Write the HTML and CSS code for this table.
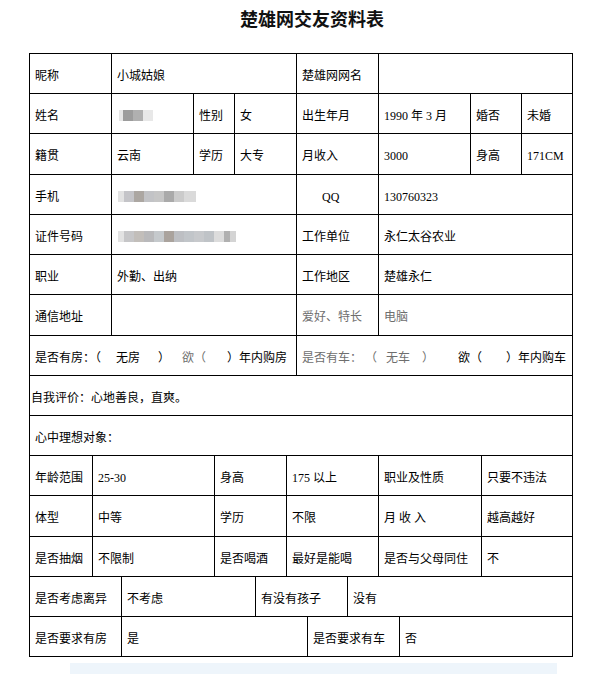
FILE: index.html
```html
<!DOCTYPE html>
<html lang="zh-CN">
<head>
<meta charset="utf-8">
<title>楚雄网交友资料表</title>
<link rel="stylesheet" href="styles.css">
</head>
<body>
<h1 class="title">楚雄网交友资料表</h1>
<div class="sheet">
  <div class="sec sec-a">
    <div class="cell">昵称</div>
    <div class="cell span3">小城姑娘</div>
    <div class="cell">楚雄网网名</div>
    <div class="cell span3"></div>

    <div class="cell">姓名</div>
    <div class="cell"><span class="blur blur-name"></span></div>
    <div class="cell">性别</div>
    <div class="cell">女</div>
    <div class="cell">出生年月</div>
    <div class="cell">1990 年 3 月</div>
    <div class="cell">婚否</div>
    <div class="cell">未婚</div>

    <div class="cell">籍贯</div>
    <div class="cell">云南</div>
    <div class="cell">学历</div>
    <div class="cell">大专</div>
    <div class="cell">月收入</div>
    <div class="cell">3000</div>
    <div class="cell">身高</div>
    <div class="cell">171CM</div>

    <div class="cell">手机</div>
    <div class="cell span3"><span class="blur blur-phone"></span></div>
    <div class="cell qq">QQ</div>
    <div class="cell span3">130760323</div>

    <div class="cell">证件号码</div>
    <div class="cell span3"><span class="blur blur-id"></span></div>
    <div class="cell">工作单位</div>
    <div class="cell span3">永仁太谷农业</div>

    <div class="cell">职业</div>
    <div class="cell span3">外勤、出纳</div>
    <div class="cell">工作地区</div>
    <div class="cell span3">楚雄永仁</div>

    <div class="cell">通信地址</div>
    <div class="cell span3"></div>
    <div class="cell faded">爱好、特长</div>
    <div class="cell span3 faded">电脑</div>

    <div class="cell span4">是否有房：（&nbsp;&nbsp;&nbsp;&nbsp;&nbsp;无房&nbsp;&nbsp;&nbsp;&nbsp;&nbsp;&nbsp;）&nbsp;&nbsp;&nbsp;&nbsp;<span class="faded">欲（</span>&nbsp;&nbsp;&nbsp;&nbsp;&nbsp;&nbsp;&nbsp;）年内购房</div>
    <div class="cell span4"><span class="faded">是否有车：&nbsp;（&nbsp;&nbsp;&nbsp;无车&nbsp;&nbsp;&nbsp;&nbsp;）</span>&nbsp;&nbsp;&nbsp;&nbsp;&nbsp;&nbsp;&nbsp;&nbsp;欲（&nbsp;&nbsp;&nbsp;&nbsp;&nbsp;&nbsp;&nbsp;&nbsp;）年内购车</div>

    <div class="cell span8 tight">自我评价：心地善良，直爽。</div>
    <div class="cell span8">心中理想对象：</div>
  </div>

  <div class="sec sec-c">
    <div class="cell">年龄范围</div>
    <div class="cell">25-30</div>
    <div class="cell">身高</div>
    <div class="cell">175 以上</div>
    <div class="cell">职业及性质</div>
    <div class="cell">只要不违法</div>

    <div class="cell">体型</div>
    <div class="cell">中等</div>
    <div class="cell">学历</div>
    <div class="cell">不限</div>
    <div class="cell">月 收 入</div>
    <div class="cell">越高越好</div>

    <div class="cell">是否抽烟</div>
    <div class="cell">不限制</div>
    <div class="cell">是否喝酒</div>
    <div class="cell">最好是能喝</div>
    <div class="cell">是否与父母同住</div>
    <div class="cell">不</div>
  </div>

  <div class="sec sec-d">
    <div class="cell">是否考虑离异</div>
    <div class="cell">不考虑</div>
    <div class="cell span2">有没有孩子</div>
    <div class="cell span2">没有</div>

    <div class="cell">是否要求有房</div>
    <div class="cell span2">是</div>
    <div class="cell span2">是否要求有车</div>
    <div class="cell">否</div>
  </div>
</div>
<div class="band"></div>
</body>
</html>
```

FILE: styles.css
```css
body {
  margin: 0;
  background: #fff;
  color: #000;
  font-family: "Liberation Serif", "Noto Sans CJK SC", serif;
  font-size: 12px;
}

.title {
  margin: 9px 0 26px;
  padding-left: 29px;
  text-align: center;
  font-family: "Noto Sans CJK SC", sans-serif;
  font-size: 18px;
  line-height: 18px;
  font-weight: bold;
  color: #111;
}

.sheet {
  margin-left: 29px;
  width: 544px;
  box-sizing: border-box;
  padding: 1px;
  background: #000;
  display: flex;
  flex-direction: column;
  gap: 1px;
}

.sec {
  display: grid;
  gap: 1px;
}

.sec-a {
  grid-template-columns: 81px 81px 40px 61px 81px 91px 50px 50px;
  grid-template-rows: 39px 39px 40px 39px 39px 39px 40px 39px 39px 39px;
}

.sec-c {
  grid-template-columns: 62px 121px 71px 91px 102px 90px;
  grid-template-rows: 39px 40px 39px;
}

.sec-d {
  grid-template-columns: 91px 133px 51px 39px 51px 172px;
  grid-template-rows: 39px 39px;
}

.cell {
  background: #fff;
  display: flex;
  align-items: center;
  box-sizing: border-box;
  padding: 4px 0 0 5px;
  line-height: 12px;
  white-space: nowrap;
  overflow: hidden;
}

.span2 { grid-column: span 2; }
.span3 { grid-column: span 3; }
.span4 { grid-column: span 4; }
.span8 { grid-column: span 8; }

.tight { padding-left: 1px; }

.qq { padding-left: 25px; }

.faded { color: #6e6e6e; }

.blur {
  display: inline-block;
  height: 11px;
  filter: blur(0.7px);
}

.blur-name {
  width: 34px;
  margin-left: 2px;
  background: linear-gradient(90deg, #e6e6e6 0 4px, #9c9c9c 4px 14px, #b0b0b0 14px 24px, #e8e8e8 24px 34px);
}

.blur-phone {
  width: 78px;
  margin-left: 1px;
  background: linear-gradient(90deg, #e2e2e2 0 6px, #c4c4c8 6px 16px, #aca7a2 16px 26px, #c2c3c6 26px 36px, #c6c6c6 36px 46px, #aaaaaa 46px 56px, #cbcbcb 56px 66px, #dadada 66px 78px);
}

.blur-id {
  width: 118px;
  margin-left: 1px;
  background: linear-gradient(90deg, #e2e2e2 0 6px, #c6c6c8 6px 16px, #c2beba 16px 26px, #b9b9bb 26px 36px, #c5c9cc 36px 46px, #aaa39d 46px 56px, #bdbfc3 56px 66px, #c1c5c9 66px 76px, #c7c9cc 76px 86px, #bfc3c7 86px 96px, #dcdcdc 96px 106px, #b0b0b0 106px 112px, #d4d4d4 112px 118px);
}

.band {
  margin: 6px 0 0 70px;
  width: 487px;
  height: 12px;
  background: #eef5fb;
}
```
